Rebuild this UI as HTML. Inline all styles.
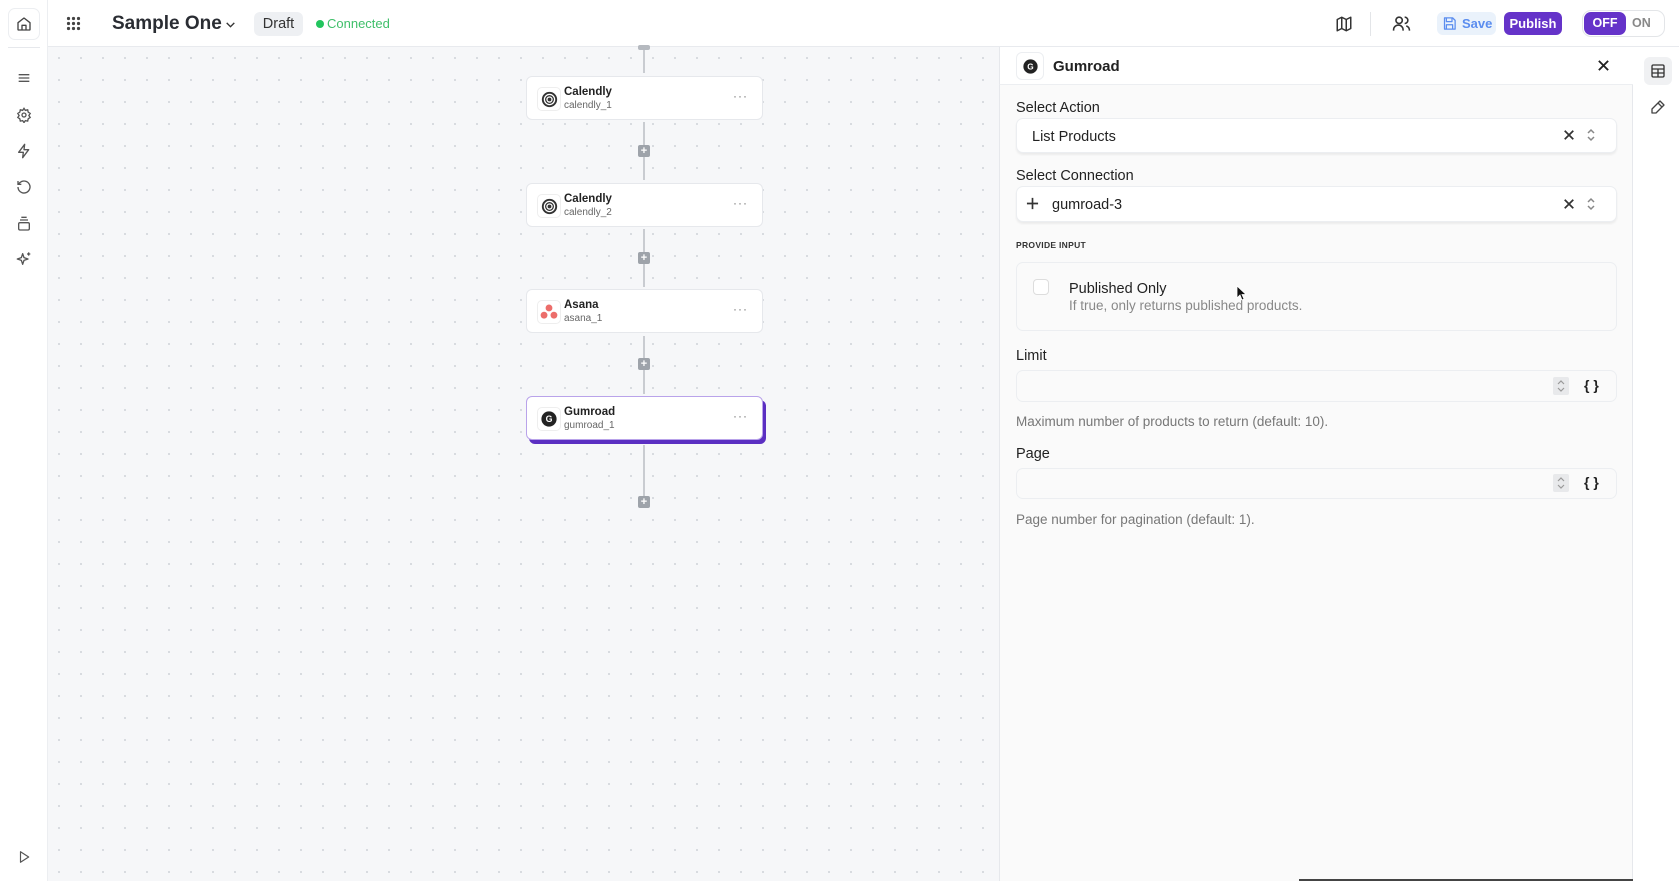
<!DOCTYPE html>
<html><head><meta charset="utf-8"><style>
*{box-sizing:border-box;margin:0;padding:0}
body{width:1679px;height:881px;overflow:hidden;font-family:"Liberation Sans",sans-serif;color:#1f2328;background:#fff;position:relative}
.abs{position:absolute}
#canvas{position:absolute;left:48px;top:47px;width:951px;height:834px;background-color:#f6f7f9;background-image:radial-gradient(#d6d9de 1px,transparent 1.2px);background-size:22px 22px}
#top{position:absolute;left:0;top:0;width:1679px;height:47px;background:#fff;border-bottom:1px solid #e8eaee}
#side{position:absolute;left:0;top:0;width:48px;height:881px;background:#fff;border-right:1px solid #eceef1}
.card{position:absolute;left:526px;width:237px;height:44px;background:#fff;border:1px solid #e6e8ec;border-radius:6px}
.card .ic{position:absolute;left:10px;top:10px;width:24px;height:24px;border-radius:5px;border:1px solid #eee;display:flex;align-items:center;justify-content:center}
.card .t{position:absolute;left:37px;top:9px;font-size:11.5px;font-weight:bold;color:#222}
.card .s{position:absolute;left:37px;top:23px;font-size:10px;color:#666}
.card .d{position:absolute;right:14px;top:12px;font-size:12px;color:#777;letter-spacing:1px}
.vl{position:absolute;left:643px;width:1.5px;background:#c9ccd1}
.pl{position:absolute;left:638px;width:12px;height:12px;background:#9ea3aa;border-radius:2px;color:#fff;font-size:11px;line-height:12px;text-align:center;font-weight:bold}
#panel{position:absolute;left:999px;top:47px;width:634px;height:834px;background:#fafafa;border-left:1px solid #e6e8ec;border-right:1px solid #e6e8ec}
.lbl{position:absolute;left:1016px;font-size:14.5px;color:#222}
.sel{position:absolute;left:1016px;width:601px;background:#fff;border:1px solid #eceef1;border-radius:7px;box-shadow:0 2px 2px rgba(0,0,0,.06)}
.help{position:absolute;left:1016px;font-size:13.5px;color:#777}
</style></head><body>
<div id="canvas"></div>
<div id="side">
 <div class="abs" style="left:8px;top:8px;width:32px;height:32px;border:1px solid #eceef1;border-radius:7px;display:flex;align-items:center;justify-content:center">
  <svg width="16" height="16" viewBox="0 0 24 24" fill="none" stroke="#444" stroke-width="2" stroke-linejoin="round"><path d="M3 10l9-7 9 7v10a1 1 0 0 1-1 1H4a1 1 0 0 1-1-1z"/><path d="M9 21v-7h6v7"/></svg></div>
 <div class="abs" style="left:8px;top:47px;width:32px;border-top:1px solid #e6e8ec"></div>
 <svg class="abs" style="left:16px;top:70px" width="16" height="16" viewBox="0 0 24 24" fill="none" stroke="#555" stroke-width="2"><path d="M4 7h16M4 12h16M4 17h16"/></svg>
 <svg class="abs" style="left:16px;top:107px" width="16" height="16" viewBox="0 0 24 24" fill="none" stroke="#555" stroke-width="2"><circle cx="12" cy="12" r="3"/><path d="M12 2l2 3 3.5-.8.8 3.5 3 2-2 3 2 3-3 2-.8 3.5-3.5-.8-2 3-2-3-3.5.8-.8-3.5-3-2 2-3-2-3 3-2 .8-3.5 3.5.8z"/></svg>
 <svg class="abs" style="left:16px;top:143px" width="16" height="16" viewBox="0 0 24 24" fill="none" stroke="#555" stroke-width="2" stroke-linejoin="round"><path d="M13 2L4 14h7l-1 8 9-12h-7z"/></svg>
 <svg class="abs" style="left:16px;top:179px" width="16" height="16" viewBox="0 0 24 24" fill="none" stroke="#555" stroke-width="2"><path d="M3 12a9 9 0 1 0 3-6.7L3 8"/><path d="M3 3v5h5"/></svg>
 <svg class="abs" style="left:16px;top:216px" width="16" height="16" viewBox="0 0 24 24" fill="none" stroke="#555" stroke-width="2"><rect x="4" y="10" width="16" height="11" rx="2"/><path d="M6 6h12M8 2h8"/></svg>
 <svg class="abs" style="left:16px;top:251px" width="16" height="16" viewBox="0 0 24 24" fill="none" stroke="#555" stroke-width="2" stroke-linejoin="round"><path d="M10 4l2 6 6 2-6 2-2 6-2-6-6-2 6-2z"/><path d="M19 2v5M16.5 4.5h5"/></svg>
 <svg class="abs" style="left:17px;top:850px" width="14" height="14" viewBox="0 0 24 24" fill="none" stroke="#555" stroke-width="2" stroke-linejoin="round"><path d="M6 3l14 9-14 9z"/></svg>
</div>
<div id="top" style="left:48px;width:1631px">
</div>
<svg class="abs" style="left:66px;top:16px" width="15" height="15" viewBox="0 0 15 15" fill="#444"><circle cx="2.5" cy="2.5" r="1.6"/><circle cx="7.5" cy="2.5" r="1.6"/><circle cx="12.5" cy="2.5" r="1.6"/><circle cx="2.5" cy="7.5" r="1.6"/><circle cx="7.5" cy="7.5" r="1.6"/><circle cx="12.5" cy="7.5" r="1.6"/><circle cx="2.5" cy="12.5" r="1.6"/><circle cx="7.5" cy="12.5" r="1.6"/><circle cx="12.5" cy="12.5" r="1.6"/></svg>
<div class="abs" style="left:112px;top:13px;font-size:19px;font-weight:bold;color:#2a2d33">Sample One</div>
<svg class="abs" style="left:224px;top:18px" width="13" height="13" viewBox="0 0 24 24" fill="none" stroke="#333" stroke-width="2.5"><path d="M5 9l7 7 7-7"/></svg>
<div class="abs" style="left:254px;top:12px;width:49px;height:24px;background:#eef0f3;border-radius:6px;font-size:14.5px;color:#333;text-align:center;line-height:24px">Draft</div>
<div class="abs" style="left:316px;top:20px;width:8px;height:8px;border-radius:50%;background:#22c55e"></div>
<div class="abs" style="left:327px;top:16px;font-size:13px;color:#3fbf6a">Connected</div>
<svg class="abs" style="left:1335px;top:15px" width="18" height="18" viewBox="0 0 24 24" fill="none" stroke="#333" stroke-width="2" stroke-linejoin="round"><path d="M3 6l6-3 6 3 6-3v15l-6 3-6-3-6 3z"/><path d="M9 3v15M15 6v15"/></svg>
<div class="abs" style="left:1370px;top:12px;width:1px;height:24px;background:#e3e5e8"></div>
<svg class="abs" style="left:1392px;top:14px" width="19" height="19" viewBox="0 0 24 24" fill="none" stroke="#333" stroke-width="2"><circle cx="9" cy="8" r="4"/><path d="M2 21v-1a6 6 0 0 1 12 0v1"/><path d="M16 4a4 4 0 0 1 0 8M18 15a6 6 0 0 1 4 5v1"/></svg>
<div class="abs" style="left:1437px;top:12px;width:59px;height:23px;background:#eaf2fb;border-radius:6px"></div>
<svg class="abs" style="left:1442px;top:16px" width="15" height="15" viewBox="0 0 24 24" fill="none" stroke="#5b8def" stroke-width="2" stroke-linejoin="round"><path d="M4 3h13l4 4v14H4z"/><path d="M7 3v6h9V3M7 21v-7h10v7"/></svg>
<div class="abs" style="left:1462px;top:16px;font-size:13px;font-weight:bold;color:#5b8def">Save</div>
<div class="abs" style="left:1504px;top:12px;width:58px;height:23px;background:#6533c9;border-radius:6px;color:#fff;font-size:13px;font-weight:bold;text-align:center;line-height:23px">Publish</div>
<div class="abs" style="left:1582px;top:10px;width:83px;height:27px;border:1px solid #e3e5e8;border-radius:9px;background:#fff"></div>
<div class="abs" style="left:1584px;top:12px;width:42px;height:23px;background:#6533c9;border-radius:7px;color:#fff;font-size:12.5px;font-weight:bold;text-align:center;line-height:23px">OFF</div>
<div class="abs" style="left:1632px;top:16px;font-size:12.5px;font-weight:bold;color:#888">ON</div>

<!-- flow -->
<div class="vl" style="top:47px;height:26px"></div>
<div class="pl" style="top:45px;height:5px;background:#b5b9bf"></div>
<div class="vl" style="top:122px;height:58px"></div>
<div class="vl" style="top:229px;height:58px"></div>
<div class="vl" style="top:336px;height:58px"></div>
<div class="vl" style="top:445px;height:55px"></div>
<div class="pl" style="top:145px">+</div>
<div class="pl" style="top:252px">+</div>
<div class="pl" style="top:358px">+</div>
<div class="pl" style="top:496px">+</div>

<div class="card" style="top:76px"><div class="ic"><svg width="17" height="17" viewBox="0 0 20 20"><circle cx="10" cy="10" r="9" fill="#333"/><circle cx="10" cy="10" r="6" fill="none" stroke="#fff" stroke-width="1.5"/><circle cx="10" cy="10" r="3" fill="none" stroke="#fff" stroke-width="1.5"/></svg></div><div class="t">Calendly</div><div class="s">calendly_1</div><div class="d">···</div></div>
<div class="card" style="top:183px"><div class="ic"><svg width="17" height="17" viewBox="0 0 20 20"><circle cx="10" cy="10" r="9" fill="#333"/><circle cx="10" cy="10" r="6" fill="none" stroke="#fff" stroke-width="1.5"/><circle cx="10" cy="10" r="3" fill="none" stroke="#fff" stroke-width="1.5"/></svg></div><div class="t">Calendly</div><div class="s">calendly_2</div><div class="d">···</div></div>
<div class="card" style="top:289px"><div class="ic"><svg width="18" height="18" viewBox="0 0 20 20" fill="#ec6d6a"><circle cx="10" cy="5.5" r="3.8"/><circle cx="4.5" cy="13.5" r="3.8"/><circle cx="15.5" cy="13.5" r="3.8"/></svg></div><div class="t">Asana</div><div class="s">asana_1</div><div class="d">···</div></div>
<div class="card" style="top:396px;border-color:#b9a3ea;box-shadow:3px 4px 0 #5b2fc2"><div class="ic"><svg width="16" height="16" viewBox="0 0 20 20"><circle cx="10" cy="10" r="9.5" fill="#222"/><text x="10" y="14" font-size="11" font-weight="bold" fill="#fff" text-anchor="middle" font-family="Liberation Sans">G</text></svg></div><div class="t">Gumroad</div><div class="s">gumroad_1</div><div class="d">···</div></div>

<!-- panel -->
<div id="panel"></div>
<div class="abs" style="left:999px;top:47px;width:634px;height:38px;background:#fff;border-bottom:1px solid #eceef1;border-left:1px solid #e6e8ec"></div>
<div class="abs" style="left:1016px;top:52px;width:28px;height:28px;border:1px solid #eceef1;border-radius:6px;background:#fff;display:flex;align-items:center;justify-content:center"><svg width="15" height="15" viewBox="0 0 20 20"><circle cx="10" cy="10" r="9.5" fill="#222"/><text x="10" y="14" font-size="11" font-weight="bold" fill="#fff" text-anchor="middle" font-family="Liberation Sans">G</text></svg></div>
<div class="abs" style="left:1053px;top:58px;font-size:15px;font-weight:bold;color:#222">Gumroad</div>
<svg class="abs" style="left:1597px;top:59px" width="13" height="13" viewBox="0 0 14 14" stroke="#222" stroke-width="2"><path d="M2 2l10 10M12 2L2 12"/></svg>

<div class="lbl" style="top:100px">Select Action</div>
<div class="sel" style="top:118px;height:35px"></div>
<div class="abs" style="left:1032px;top:129px;font-size:14.5px;color:#222">List Products</div>
<svg class="abs" style="left:1563px;top:129px" width="12" height="12" viewBox="0 0 14 14" stroke="#333" stroke-width="2"><path d="M2 2l10 10M12 2L2 12"/></svg>
<svg class="abs" style="left:1586px;top:127px" width="10" height="16" viewBox="0 0 10 16" fill="none" stroke="#888" stroke-width="1.5"><path d="M2 6l3-3 3 3M2 10l3 3 3-3"/></svg>

<div class="lbl" style="top:168px">Select Connection</div>
<div class="sel" style="top:186px;height:36px"></div>
<svg class="abs" style="left:1026px;top:197px" width="13" height="13" viewBox="0 0 14 14" stroke="#333" stroke-width="1.8"><path d="M7 1v12M1 7h12"/></svg>
<div class="abs" style="left:1052px;top:197px;font-size:14.5px;color:#222">gumroad-3</div>
<svg class="abs" style="left:1563px;top:198px" width="12" height="12" viewBox="0 0 14 14" stroke="#333" stroke-width="2"><path d="M2 2l10 10M12 2L2 12"/></svg>
<svg class="abs" style="left:1586px;top:196px" width="10" height="16" viewBox="0 0 10 16" fill="none" stroke="#888" stroke-width="1.5"><path d="M2 6l3-3 3 3M2 10l3 3 3-3"/></svg>

<div class="abs" style="left:1016px;top:240px;font-size:8.5px;font-weight:bold;color:#333;letter-spacing:.3px">PROVIDE INPUT</div>
<div class="abs" style="left:1016px;top:262px;width:601px;height:69px;border:1px solid #eceef1;border-radius:7px;background:#fafafa"></div>
<div class="abs" style="left:1033px;top:279px;width:16px;height:16px;border:1px solid #ddd;border-radius:4px;background:#fff"></div>
<div class="abs" style="left:1069px;top:281px;font-size:14.5px;color:#222">Published Only</div>
<div class="abs" style="left:1069px;top:298px;font-size:13.5px;color:#888">If true, only returns published products.</div>
<svg class="abs" style="left:1236px;top:285px" width="11" height="16" viewBox="0 0 11 16"><path d="M1 1v12l3-3 2 5 2-1-2-4.5h4z" fill="#111" stroke="#fff" stroke-width=".8"/></svg>

<div class="lbl" style="top:348px">Limit</div>
<div class="abs" style="left:1016px;top:370px;width:601px;height:32px;border:1px solid #eceef1;border-radius:7px;background:#fafafa"></div>
<div class="abs" style="left:1553px;top:377px;width:16px;height:18px;background:#e8e9eb;border-radius:2px"></div>
<svg class="abs" style="left:1556px;top:378px" width="10" height="16" viewBox="0 0 10 16" fill="none" stroke="#999" stroke-width="1.2"><path d="M2 6l3-3 3 3M2 10l3 3 3-3"/></svg>
<div class="abs" style="left:1584px;top:377px;font-size:14px;font-weight:bold;color:#222">{ }</div>
<div class="help" style="top:414px">Maximum number of products to return (default: 10).</div>

<div class="lbl" style="top:446px">Page</div>
<div class="abs" style="left:1016px;top:468px;width:601px;height:31px;border:1px solid #eceef1;border-radius:7px;background:#fafafa"></div>
<div class="abs" style="left:1553px;top:474px;width:16px;height:18px;background:#e8e9eb;border-radius:2px"></div>
<svg class="abs" style="left:1556px;top:475px" width="10" height="16" viewBox="0 0 10 16" fill="none" stroke="#999" stroke-width="1.2"><path d="M2 6l3-3 3 3M2 10l3 3 3-3"/></svg>
<div class="abs" style="left:1584px;top:474px;font-size:14px;font-weight:bold;color:#222">{ }</div>
<div class="help" style="top:512px">Page number for pagination (default: 1).</div>

<div class="abs" style="left:1299px;top:879px;width:334px;height:2px;background:#444"></div>

<!-- right icon column -->
<div class="abs" style="left:1644px;top:57px;width:28px;height:28px;background:#f0f1f3;border-radius:6px"></div>
<svg class="abs" style="left:1650px;top:63px" width="16" height="16" viewBox="0 0 24 24" fill="none" stroke="#333" stroke-width="2"><rect x="3" y="3" width="18" height="18" rx="2"/><path d="M3 9h18M3 15h18M12 9v12"/></svg>
<svg class="abs" style="left:1650px;top:99px" width="16" height="16" viewBox="0 0 24 24" fill="none" stroke="#444" stroke-width="2" stroke-linejoin="round"><path d="M15 3l6 6L9 21H3v-6z"/><path d="M12 6l6 6"/></svg>
</body></html>
